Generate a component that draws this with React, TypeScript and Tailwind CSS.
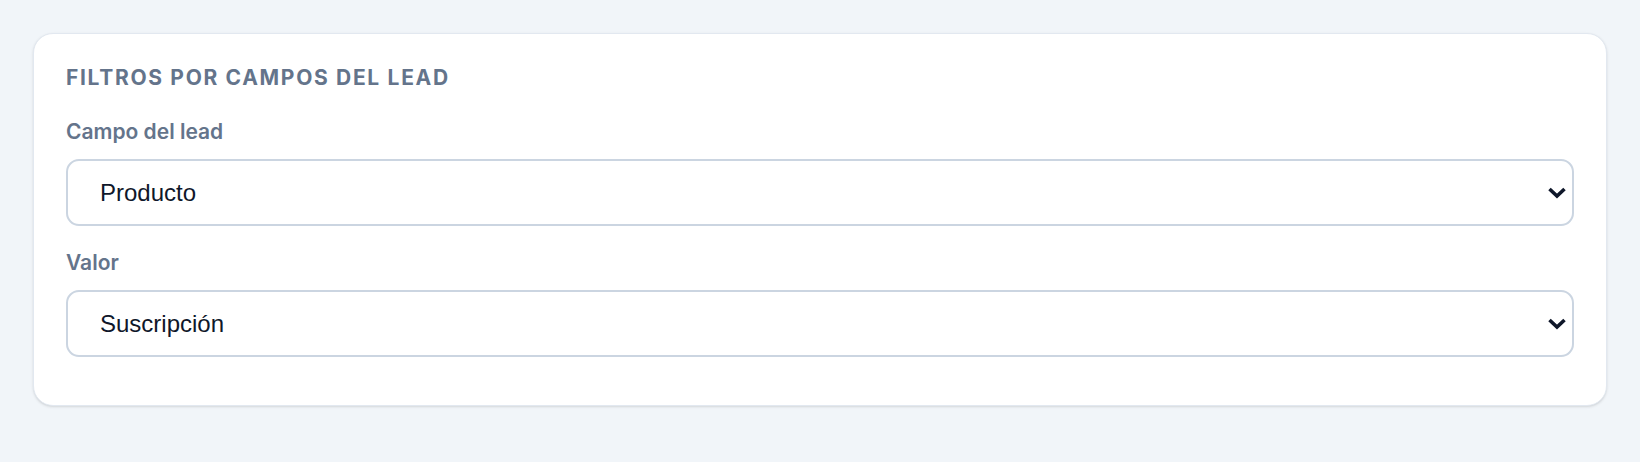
import React, { useState } from 'react';

const Chevron: React.FC = () => (
  <svg
    width="20"
    height="13"
    viewBox="0 0 20 13"
    fill="none"
    className="pointer-events-none absolute right-[7px] top-1/2 -translate-y-1/2"
  >
    <polyline points="2.5,2.5 10,9.5 17.5,2.5" stroke="#0f172a" strokeWidth="3.6" />
  </svg>
);

const Field: React.FC<{
  label: string;
  value: string;
  options: string[];
  onChange: (v: string) => void;
  className?: string;
}> = ({ label, value, options, onChange, className }) => (
  <div className={className}>
    <label className="block text-[21px] leading-[24px] font-semibold text-[#64748b] mb-[15px]">
      {label}
    </label>
    <div className="relative">
      <select
        value={value}
        onChange={e => onChange(e.target.value)}
        className="block w-full h-[67px] appearance-none rounded-[13px] border-2 border-[#cbd5e1] bg-white pl-[32px] pr-12 text-[24px] text-[#0f172a] outline-none"
        style={{ fontFamily: '"Liberation Sans", Arial, sans-serif' }}
      >
        {options.map(o => (
          <option key={o} value={o}>
            {o}
          </option>
        ))}
      </select>
      <Chevron />
    </div>
  </div>
);

const App: React.FC = () => {
  const [campo, setCampo] = useState('Producto');
  const [valor, setValor] = useState('Suscripción');

  return (
    <div className="min-h-screen bg-[#f1f5f9] p-[33px] font-['Inter',sans-serif]">
      <div className="rounded-[20px] border border-[#e2e8f0] bg-white px-[32px] pt-[32px] pb-[48px] shadow-sm">
        <h2 className="text-[21px] leading-[24px] font-bold uppercase tracking-[0.08em] text-[#64748b] mb-[30px]">
          Filtros por campos del lead
        </h2>

        {/* Campo */}
        <Field
          label="Campo del lead"
          value={campo}
          options={['Producto', 'Origen', 'Estado', 'Ciudad']}
          onChange={setCampo}
          className="mb-[25px]"
        />

        {/* Valor */}
        <Field
          label="Valor"
          value={valor}
          options={['Suscripción', 'Compra única', 'Prueba gratuita']}
          onChange={setValor}
        />
      </div>
    </div>
  );
};

export default App;
